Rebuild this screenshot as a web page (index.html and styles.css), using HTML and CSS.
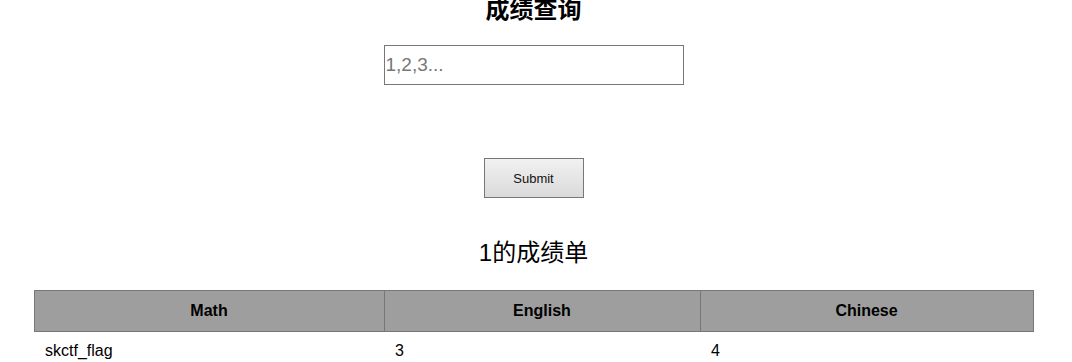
FILE: index.html
```html
<!DOCTYPE html>
<html lang="zh">
<head>
    <meta charset="UTF-8" />
    <title>成绩查询</title>
    <link rel="stylesheet" href="styles.css">
</head>
<body>
    <div class="page">
        <h2 class="title">成绩查询</h2>
        <form class="query-form" onsubmit="return false;">
            <input type="text" class="id-input" placeholder="1,2,3..." />
            <button type="submit" class="submit-btn">Submit</button>
        </form>
        <h3 class="result-title">1的成绩单</h3>
        <table class="scores">
            <thead>
                <tr>
                    <th class="col-math">Math</th>
                    <th class="col-english">English</th>
                    <th class="col-chinese">Chinese</th>
                </tr>
            </thead>
            <tbody>
                <tr>
                    <td>skctf_flag</td>
                    <td>3</td>
                    <td>4</td>
                </tr>
            </tbody>
        </table>
    </div>
</body>
</html>
```

FILE: styles.css
```css
body {
    margin: 0;
    padding: 0;
    font-family: 'Liberation Sans', Arial, 'Noto Sans CJK SC', sans-serif;
    background: #ffffff;
    color: #000;
}

.page {
    width: 1067px;
    display: flex;
    flex-direction: column;
    align-items: center;
}

.title {
    font-family: 'Noto Sans CJK SC', serif;
    font-size: 24px;
    font-weight: bold;
    line-height: 24px;
    margin: -4px 0 0 0;
}

.query-form {
    display: flex;
    flex-direction: column;
    align-items: center;
    margin-top: 25px;
}

.id-input {
    box-sizing: border-box;
    width: 300px;
    height: 40px;
    border: 1px solid #777;
    padding: 0 1px;
    font-family: 'Liberation Sans', Arial, sans-serif;
    font-size: 19px;
    outline: none;
}

    .id-input::placeholder {
        color: #777;
    }

.submit-btn {
    box-sizing: border-box;
    width: 100px;
    height: 40px;
    margin-top: 73px;
    border: 1px solid #777;
    background: linear-gradient(#f1f1f1, #dadada);
    font-family: 'Liberation Sans', Arial, sans-serif;
    font-size: 13px;
    color: #111;
    cursor: pointer;
}

.result-title {
    font-family: 'Liberation Sans', Arial, 'Noto Sans CJK SC', sans-serif;
    font-size: 24px;
    font-weight: normal;
    line-height: 26px;
    margin: 42px 0 0 0;
}

.scores {
    width: 1000px;
    border-collapse: collapse;
    margin-top: 24px;
    font-size: 16px;
}

    .scores th {
        height: 40px;
        background: #9e9e9e;
        border: 1px solid #777;
        font-weight: bold;
        padding: 0;
    }

    .scores td {
        height: 38px;
        padding: 0 11px;
        text-align: left;
    }

.col-math {
    width: 349px;
}

.col-english {
    width: 315px;
}
```
